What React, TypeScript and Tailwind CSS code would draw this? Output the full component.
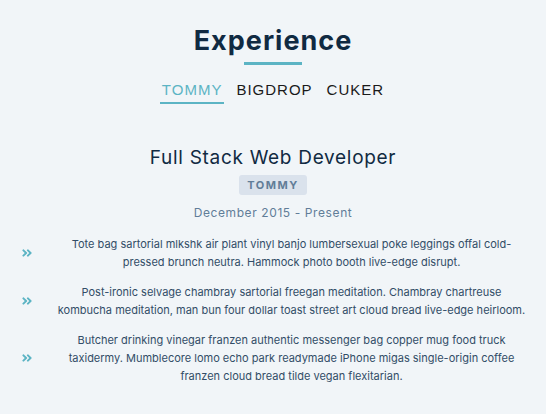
import { useState } from 'react'
import { FaAngleDoubleRight } from 'react-icons/fa'

const jobs = [
  {
    company: 'TOMMY',
    title: 'Full Stack Web Developer',
    dates: 'December 2015 - Present',
    duties: [
      'Tote bag sartorial mlkshk air plant vinyl banjo lumbersexual poke leggings offal cold-pressed brunch neutra. Hammock photo booth live-edge disrupt.',
      'Post-ironic selvage chambray sartorial freegan meditation. Chambray chartreuse kombucha meditation, man bun four dollar toast street art cloud bread live-edge heirloom.',
      'Butcher drinking vinegar franzen authentic messenger bag copper mug food truck taxidermy. Mumblecore lomo echo park readymade iPhone migas single-origin coffee franzen cloud bread tilde vegan flexitarian.',
    ],
  },
  { company: 'BIGDROP', title: '', dates: '', duties: [] },
  { company: 'CUKER', title: '', dates: '', duties: [] },
]

export default function App() {
  const [value, setValue] = useState(0)
  const job = jobs[value]

  return (
    <main className="min-h-[414px] w-full bg-[#f1f5f8] font-['Inter',sans-serif] text-[#102a42]">
      <section className="flex flex-col items-center pt-[24px]">
        <h2 className="text-[27px] font-bold leading-[34px] tracking-[1px] text-[#102a42]">
          Experience
        </h2>
        <div className="mt-[4px] h-[3px] w-[58px] bg-[#5cb4c4]" />

        <div className="mt-[15px] flex gap-[10px] font-['Liberation_Sans',sans-serif]">
          {jobs.map((j, i) => (
            <button
              key={j.company}
              type="button"
              onClick={() => setValue(i)}
              className={
                i === value
                  ? 'border-b-2 border-[#5cb4c4] px-[2px] pb-[2px] text-[15px] leading-[20px] tracking-[1px] text-[#5cb4c4]'
                  : 'border-b-2 border-transparent px-[2px] pb-[2px] text-[15px] leading-[20px] tracking-[1px] text-[#1a1a1a]'
              }
            >
              {j.company}
            </button>
          ))}
        </div>

        <article className="mt-[42px] flex w-full flex-col items-center">
          <h3 className="text-[19px] leading-[24px] tracking-[0.7px] text-[#102a42]">{job.title}</h3>
          <h4 className="mt-[5px] rounded-[3px] bg-[#dae2ec] px-[8px] py-[3px] text-[11px] font-bold leading-[14px] tracking-[1.5px] text-[#617d98]">
            {job.company}
          </h4>
          <p className="mt-[10px] text-[12px] leading-[16px] tracking-[0.6px] text-[#617d98]">{job.dates}</p>

          <div className="mt-[14px] flex w-full flex-col gap-[12px] pl-[21px] pr-[18px]">
            {job.duties.map((duty, i) => (
              <div key={i} className="flex items-center gap-[22px]">
                <FaAngleDoubleRight size={12} className="shrink-0 text-[#5cb4c4]" />
                <p className="flex-1 text-center text-[11px] leading-[18px] text-[#324d67]">{duty}</p>
              </div>
            ))}
          </div>
        </article>
      </section>
    </main>
  )
}
